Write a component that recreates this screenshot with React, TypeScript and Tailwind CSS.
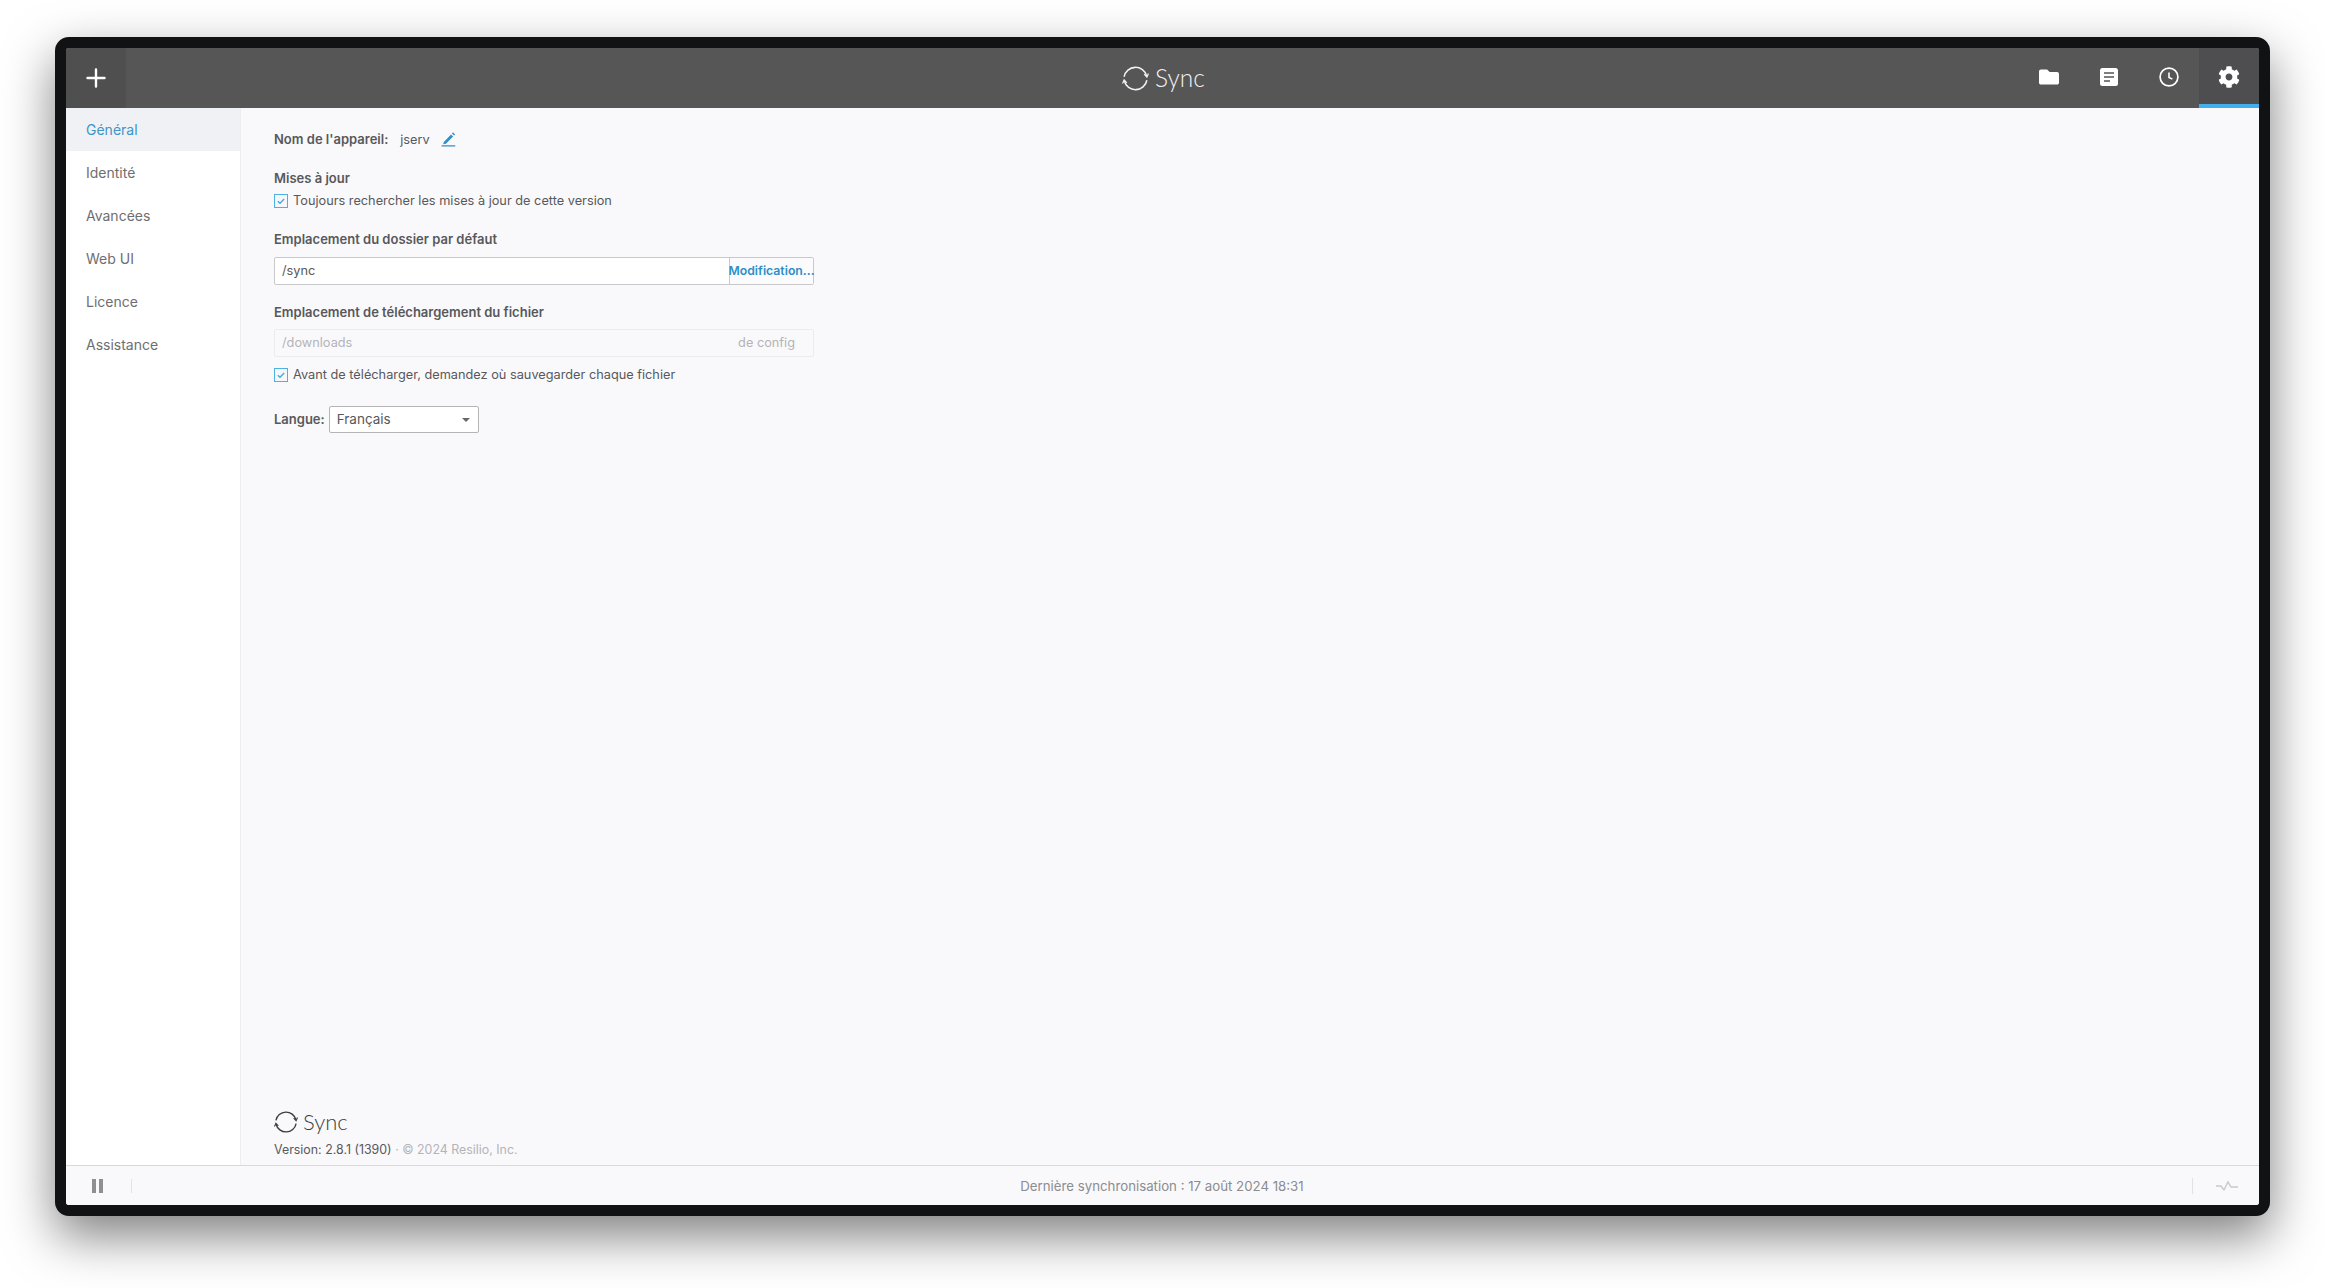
import { FaCog, FaFolder } from 'react-icons/fa';

const navItems = ['Général', 'Identité', 'Avancées', 'Web UI', 'Licence', 'Assistance'];

function SyncRing({ className }: { className: string }) {
    return (
        <svg viewBox="0 0 28 28" fill="none" stroke="currentColor" strokeWidth="1.6" className={className}>
            <path d="M2.2 12.2A12 12 0 0 1 25.6 11.4" />
            <path d="M25.8 15.8A12 12 0 0 1 2.4 16.6" />
            <path d="M23 9.4l2.8 3.2 1.6-3.8" strokeWidth="1.3" />
            <path d="M5 18.6l-2.8-3.2-1.6 3.8" strokeWidth="1.3" />
        </svg>
    );
}

function Checkbox() {
    return (
        <span className="flex h-[14px] w-[14px] shrink-0 items-center justify-center border border-[#4fb0e4] bg-[#f4f8fc]">
            <svg viewBox="0 0 12 12" fill="none" stroke="#4fa8dc" strokeWidth="1.7" className="h-[10px] w-[10px]">
                <path d="M2.2 6.2l2.6 2.5 5-5.2" />
            </svg>
        </span>
    );
}

function HeaderTab({ active, children }: { active?: boolean; children: React.ReactNode }) {
    return (
        <div
            className={
                active
                    ? 'flex h-full w-[60px] items-center justify-center border-b-4 border-[#42b0ef] bg-[#4e4e50] pt-[2px] text-white'
                    : 'flex h-full w-[60px] items-center justify-center pb-[2px] text-white'
            }
        >
            {children}
        </div>
    );
}

export default function App() {
    return (
        <div className="h-[1288px] w-[2325px] overflow-hidden bg-white pl-[55px] pt-[37px] font-['Inter',sans-serif] text-[#58585a]">
            <div className="flex h-[1179px] w-[2215px] flex-col overflow-hidden rounded-[14px] border-[11px] border-[#111214] bg-[#f9f9fc] shadow-[0_20px_50px_rgba(0,0,0,0.5)]">
                <header className="flex h-[60px] shrink-0 items-center bg-[#565656]">
                    <div className="flex h-full w-[60px] items-center justify-center bg-[#4f4f4f]">
                        <svg viewBox="0 0 20 20" stroke="white" strokeWidth="2.4" strokeLinecap="round" className="h-5 w-5">
                            <path d="M10 1.5v17M1.5 10h17" />
                        </svg>
                    </div>
                    <div className="flex flex-1 items-center justify-center gap-[6px] pl-[182px] text-[#f1f1f1]">
                        <SyncRing className="h-[27px] w-[27px]" />
                        <span className="font-['Lato',sans-serif] text-[24.5px] font-light leading-none">Sync</span>
                    </div>
                    <HeaderTab>
                        <FaFolder className="h-[20px] w-[20px]" />
                    </HeaderTab>
                    <HeaderTab>
                        <svg viewBox="0 0 18 18" className="h-[18px] w-[18px]">
                            <rect width="18" height="18" rx="2.5" fill="white" />
                            <path d="M4 5h10M4 9h10M4 13h6" stroke="#565656" strokeWidth="1.7" />
                        </svg>
                    </HeaderTab>
                    <HeaderTab>
                        <svg viewBox="0 0 20 20" fill="none" stroke="white" className="h-5 w-5">
                            <circle cx="10" cy="10" r="8.9" strokeWidth="1.7" />
                            <path d="M10 5.5V10.5l3.4 1.6" strokeWidth="1.6" />
                        </svg>
                    </HeaderTab>
                    <HeaderTab active>
                        <FaCog className="h-[22px] w-[22px]" />
                    </HeaderTab>
                </header>

                <div className="flex min-h-0 flex-1">
                    <nav className="w-[175px] shrink-0 border-r border-[#eeeef1] bg-white">
                        {navItems.map((item, i) => (
                            <div
                                key={item}
                                className={
                                    i === 0
                                        ? 'flex h-[43px] items-center bg-[#f0f1f4] pl-[20px] text-[14px] text-[#3f94c8]'
                                        : 'flex h-[43px] items-center pl-[20px] text-[14px] text-[#6e6e70]'
                                }
                            >
                                {item}
                            </div>
                        ))}
                    </nav>

                    <main className="flex flex-1 flex-col justify-between pl-[33px] pt-[23px] text-[12.75px]">
                        <div className="w-[540px]">
                            <div className="flex h-[18px] items-center">
                                <span className="text-[13px] font-semibold">Nom de l'appareil:</span>
                                <span className="ml-[12px]">jserv</span>
                                <svg viewBox="0 0 14 14" className="mb-[2px] ml-[11px] h-[16px] w-[16px] text-[#2f8ec8]" fill="currentColor">
                                    <path d="M2.5 9.6L8.8 3l1.8 1.8-6.3 6.3-2.4.6zM9.6 2.2l.9-1 1.8 1.8-.9 1z" />
                                    <path d="M0.5 13h12" stroke="currentColor" strokeWidth="1.1" />
                                </svg>
                            </div>

                            <div className="mt-[20px] text-[13px] font-semibold leading-[18px]">Mises à jour</div>
                            <label className="mt-[5px] flex h-[18px] items-center gap-[5px]">
                                <Checkbox />
                                Toujours rechercher les mises à jour de cette version
                            </label>

                            <div className="mt-[20px] text-[13px] font-semibold leading-[18px]">Emplacement du dossier par défaut</div>
                            <div className="mt-[9px] flex h-[28px] rounded-[2px] border border-[#c9c9cc] bg-white">
                                <div className="flex flex-1 items-center pl-[7px]">/sync</div>
                                <div className="flex w-[84px] items-center justify-center whitespace-nowrap border-l border-[#c9c9cc] bg-[#fbfbfd] text-[12.25px] font-semibold text-[#2f8ec8]">
                                    Modification...
                                </div>
                            </div>

                            <div className="mt-[18px] text-[13px] font-semibold leading-[18px]">Emplacement de téléchargement du fichier</div>
                            <div className="mt-[8px] flex h-[28px] items-center justify-between rounded-[2px] border border-[#ececef] pl-[7px] pr-[18px] text-[#b4b4b7]">
                                <span>/downloads</span>
                                <span>de config</span>
                            </div>

                            <label className="mt-[9px] flex h-[18px] items-center gap-[5px]">
                                <Checkbox />
                                Avant de télécharger, demandez où sauvegarder chaque fichier
                            </label>

                            <div className="mt-[22px] flex h-[27px] items-center gap-[4px]">
                                <span className="text-[13px] font-semibold">Langue:</span>
                                <div className="flex h-full w-[150px] items-center justify-between rounded-[2px] border border-[#b5b5b8] bg-white pl-[7px] pr-[8px] text-[13.5px]">
                                    Français
                                    <span className="h-0 w-0 border-x-[4px] border-t-[4px] border-x-transparent border-t-[#666]" />
                                </div>
                            </div>
                        </div>

                        <div className="pb-[6px]">
                            <div className="flex items-center gap-[5px] text-[#3d3d3f]">
                                <SyncRing className="h-[24px] w-[24px]" />
                                <span className="font-['Lato',sans-serif] text-[22px] font-light leading-none">Sync</span>
                            </div>
                            <div className="mt-[7px] text-[12.4px] leading-[18px]">
                                Version: 2.8.1 (1390)
                                <span className="text-[#b4b4b7]"> · © 2024 Resilio, Inc.</span>
                            </div>
                        </div>
                    </main>
                </div>

                <footer className="flex h-[40px] shrink-0 items-center border-t border-[#d9d9dc] bg-[#f9f9fc]">
                    <div className="flex w-[66px] items-center justify-center gap-[3px] border-r border-[#e2e2e5] pr-[2px]">
                        <span className="h-[14px] w-[4px] bg-[#8f8f92]" />
                        <span className="h-[14px] w-[4px] bg-[#8f8f92]" />
                    </div>
                    <div className="flex-1 pt-[3px] text-center text-[13.25px] text-[#8c8c8f]">
                        Dernière synchronisation : 17 août 2024 18:31
                    </div>
                    <div className="flex h-[16px] w-[67px] items-center justify-center border-l border-[#e2e2e5] pl-[2px]">
                        <svg viewBox="0 0 22 12" fill="none" stroke="#c9c9cc" strokeWidth="1.4" className="h-[12px] w-[22px]">
                            <path d="M0 6h5l3 4 4-8 3 5h7" />
                        </svg>
                    </div>
                </footer>
            </div>
        </div>
    );
}
